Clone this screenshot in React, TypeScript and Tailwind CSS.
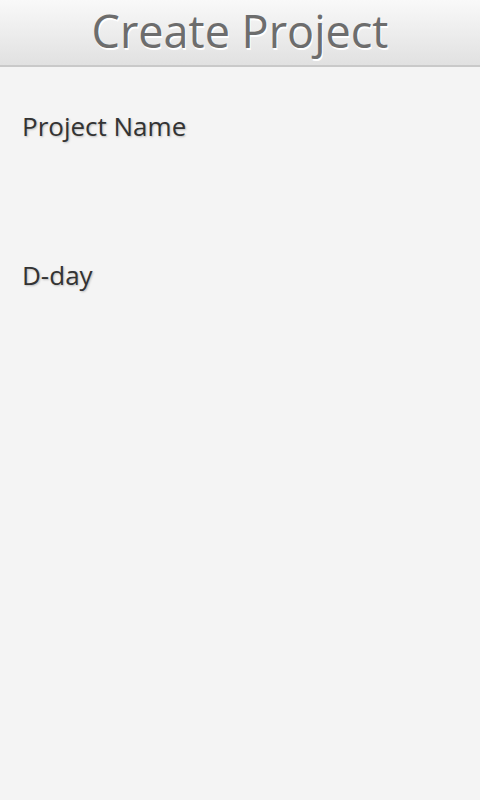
export default function App() {
  return (
    <div className="min-h-[800px] w-full bg-[#f4f4f4] font-['Open_Sans',sans-serif]">
      <header className="h-[67px] border-b-2 border-[#c9c9c9] bg-gradient-to-b from-[#f9f9f9] to-[#e1e1e1] flex items-center justify-center">
        <h1 className="text-[45px] leading-none text-[#6d6d6d] [text-shadow:1px_2px_0_#ffffff] -mt-1">
          Create Project
        </h1>
      </header>

      <div className="px-[22px] pt-[41px]">
        <p className="text-[26px] leading-[36px] text-[#333333] [text-shadow:1px_1px_2px_#bdbdbd]">Project Name</p>
        <div className="h-[113px]" />
        <p className="text-[26px] leading-[36px] text-[#333333] [text-shadow:1px_1px_2px_#bdbdbd]">D-day</p>
      </div>
    </div>
  );
}
